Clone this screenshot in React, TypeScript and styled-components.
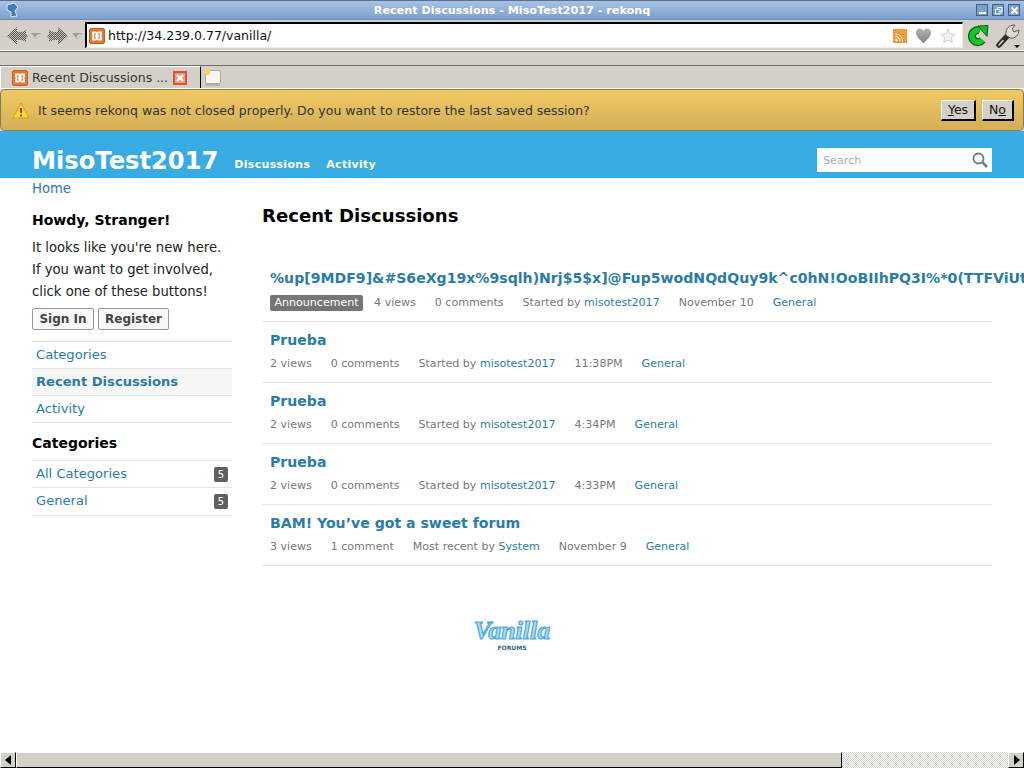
import styled, { createGlobalStyle } from 'styled-components';

const GlobalStyle = createGlobalStyle`
  html, body { margin: 0; padding: 0; height: 100%; overflow: hidden; background: #fff; }
  body { font-family: "DejaVu Sans", sans-serif; }
  * { box-sizing: border-box; }
  a { text-decoration: none; color: #2b7ba8; }
`;

const discussions = [
  { title: 'Prueba', views: '2 views', comments: '0 comments', label: 'Started by', user: 'misotest2017', date: '11:38PM' },
  { title: 'Prueba', views: '2 views', comments: '0 comments', label: 'Started by', user: 'misotest2017', date: '4:34PM' },
  { title: 'Prueba', views: '2 views', comments: '0 comments', label: 'Started by', user: 'misotest2017', date: '4:33PM' },
  { title: 'BAM! You’ve got a sweet forum', views: '3 views', comments: '1 comment', label: 'Most recent by', user: 'System', date: 'November 9' },
];

const Favicon = () => (
  <IconBox width="16" height="16" viewBox="0 0 16 16">
    <rect x="0.5" y="0.5" width="15" height="15" rx="1.5" fill="#e8772e" stroke="#c65f20" />
    <path d="M3 3.500h4l1 1 1-1h4v3.500l-1 1 1 1v3.500H9l-1-1-1 1H3V9l1-1-1-1z" fill="#fff" />
    <path d="M4.500 5.500H7L6 8l1 2.500H4.500L5.500 8zM11.500 5.500H9L10 8l-1 2.500h2.500L10.500 8z" fill="#e8772e" />
  </IconBox>
);

const NavArrow = ({ flip }: { flip?: boolean }) => (
  <IconBox width="21" height="20" viewBox="0 0 21 20" style={{ transform: flip ? 'scaleX(-1)' : undefined }}>
    <defs>
      <pattern id={flip ? 'ditherB' : 'ditherA'} width="2" height="2" patternUnits="userSpaceOnUse">
        <rect width="2" height="2" fill="#c8c6c1" />
        <rect width="1" height="1" fill="#55534f" />
        <rect x="1" y="1" width="1" height="1" fill="#55534f" />
      </pattern>
    </defs>
    <path d="M0 10 L10 1 V6 H15 L19 4 V8 L21 10 L19 12 V16 L15 14 H10 V19 Z" fill={`url(#${flip ? 'ditherB' : 'ditherA'})`} />
  </IconBox>
);

const Caret = () => (
  <IconBox width="10" height="6" viewBox="0 0 10 6">
    <path d="M0 0H10L5 6Z" fill="#a09e98" />
    <path d="M9 1L5 5 4.500 4 7 1.500Z" fill="#f4f3ef" />
  </IconBox>
);

const App = () => (
  <Window>
    <GlobalStyle />
    <TitleBar>
      <AppIcon viewBox="0 0 14 16" width="14" height="16">
        <path d="M2 3 L9 1 L13 5 L10 9 L12 14 L6 15 L6 10 L2 8Z" fill="#3f7cb5" stroke="#e3e9f0" />
      </AppIcon>
      <TitleText>Recent Discussions - MisoTest2017 - rekonq</TitleText>
      <WindowButtons>
        <WindowButton><svg width="9" height="9" viewBox="0 0 9 9"><rect x="1" y="6" width="7" height="2" fill="#fff" /></svg></WindowButton>
        <WindowButton><svg width="9" height="9" viewBox="0 0 9 9"><path d="M1.500 3.500h4.500v4.500h-4.500zM3.500 3V1.500h4.500v4.500H6.500" fill="none" stroke="#fff" /></svg></WindowButton>
        <WindowButton><svg width="9" height="9" viewBox="0 0 9 9"><path d="M1.500 1.500l6 6M7.500 1.500l-6 6" stroke="#fff" strokeWidth="2" /></svg></WindowButton>
      </WindowButtons>
    </TitleBar>

    <Toolbar>
      <NavGroup>
        <NavArrow />
        <Caret />
        <NavArrow flip />
        <Caret />
      </NavGroup>
      <UrlBar>
        <Favicon />
        <UrlText>http://34.239.0.77/vanilla/</UrlText>
        <UrlIcons>
          <svg width="14" height="14" viewBox="0 0 14 14">
            <rect width="14" height="14" fill="#f39a3a" />
            <circle cx="3.500" cy="11" r="1.200" fill="#fff" />
            <path d="M2.500 7.500a4.500 4.500 0 0 1 4.500 4.500M2.500 5a7 7 0 0 1 7 7" fill="none" stroke="#fff" />
          </svg>
          <svg width="17" height="17" viewBox="0 0 17 17">
            <defs>
              <linearGradient id="heartFill" x1="0" y1="0" x2="0" y2="1">
                <stop offset="0" stopColor="#b5b5b5" />
                <stop offset="1" stopColor="#808080" />
              </linearGradient>
            </defs>
            <path d="M8.500 16 C3 11 1 9 1 5.500 C1 3 3 1.500 5 1.500 C6.500 1.500 8 2.500 8.500 4 C9 2.500 10.500 1.500 12 1.500 C14 1.500 16 3 16 5.500 C16 9 14 11 8.500 16Z" fill="url(#heartFill)" />
          </svg>
          <svg width="16" height="16" viewBox="0 0 16 16">
            <path d="M8 1 L10.100 5.600 15 6.200 11.400 9.600 12.400 14.600 8 12.100 3.600 14.600 4.600 9.600 1 6.200 5.900 5.600Z" fill="#f2f2f0" stroke="#cfcfcb" />
          </svg>
        </UrlIcons>
      </UrlBar>
      <ToolIcons>
        <svg width="22" height="24" viewBox="0 0 22 24">
          <path d="M15.500 16 A6 6 0 1 1 13 6.500" fill="none" stroke="#0a5f12" strokeWidth="8" />
          <path d="M15.500 16 A6 6 0 1 1 13 6.500" fill="none" stroke="#17c42a" strokeWidth="5.500" />
          <path d="M11 2 L21 1.500 L20 12.500 Z" fill="#17b528" stroke="#0a5f12" />
        </svg>
        <WrenchWrap>
          <svg width="24" height="24" viewBox="0 0 24 24">
            <path d="M3 21 L14 9" stroke="#2e2c2a" strokeWidth="5.500" strokeLinecap="round" />
            <path d="M3 21 L7 16.500" stroke="#d8d6d1" strokeWidth="1.500" strokeLinecap="round" />
            <path d="M10 11 C9 5 13 1 19 1 L16 5 L18 8 L23 6 C23 11 19 15 14 14Z" fill="#dedcd7" stroke="#5d5b57" />
          </svg>
          <WrenchCaret />
        </WrenchWrap>
      </ToolIcons>
    </Toolbar>

    <SpacerBar />

    <TabBar>
      <Tab>
        <Favicon />
        <TabLabel>Recent Discussions ...</TabLabel>
        <TabClose>
          <svg width="8" height="8" viewBox="0 0 8 8"><path d="M1 1l6 6M7 1L1 7" stroke="#fff" strokeWidth="2.200" /></svg>
        </TabClose>
      </Tab>
      <NewTab>
        <svg width="17" height="17" viewBox="0 0 17 17">
          <rect x="1" y="15" width="15" height="2" fill="#b5b3ac" />
          <rect x="1.500" y="1.500" width="15" height="13" rx="1.500" fill="#f7f6f1" stroke="#aaa89f" />
          <circle cx="3.500" cy="3" r="3" fill="#f3d75c" />
        </svg>
      </NewTab>
    </TabBar>

    <Notice>
      <IconBox width="18" height="17" viewBox="0 0 18 17">
        <path d="M9 1 L17 16 H1 Z" fill="#f8dc36" stroke="#e09a1c" strokeLinejoin="round" />
        <path d="M9 6v5" stroke="#a33" strokeWidth="2" />
        <rect x="8" y="12.500" width="2" height="2" fill="#a33" />
      </IconBox>
      <NoticeText>It seems rekonq was not closed properly. Do you want to restore the last saved session?</NoticeText>
      <NoticeButton $width={35}><u>Y</u>es</NoticeButton>
      <NoticeButton $width={32}>N<u>o</u></NoticeButton>
    </Notice>

    <Page>
      <SiteHeader>
        <SiteTitle>MisoTest2017</SiteTitle>
        <SiteNav>
          <a>Discussions</a>
          <a>Activity</a>
        </SiteNav>
        <SearchBox>
          <SearchText>Search</SearchText>
          <svg width="16" height="16" viewBox="0 0 16 16">
            <circle cx="6.500" cy="6.500" r="5" fill="none" stroke="#777" strokeWidth="1.800" />
            <path d="M10.500 10.500L15 15" stroke="#777" strokeWidth="2.500" />
          </svg>
        </SearchBox>
      </SiteHeader>

      <Breadcrumb><a>Home</a></Breadcrumb>

      <Columns>
        <Sidebar>
          <Howdy>Howdy, Stranger!</Howdy>
          <Intro>It looks like you're new here.<br />If you want to get involved,<br />click one of these buttons!</Intro>
          <AuthRow>
            <AuthButton>Sign In</AuthButton>
            <AuthButton>Register</AuthButton>
          </AuthRow>
          <SideList>
            <SideItem><a>Categories</a></SideItem>
            <SideItem $active><a>Recent Discussions</a></SideItem>
            <SideItem><a>Activity</a></SideItem>
          </SideList>
          <SideHeading>Categories</SideHeading>
          <SideList>
            <SideItem><a>All Categories</a><Count>5</Count></SideItem>
            <SideItem $tall><a>General</a><Count>5</Count></SideItem>
          </SideList>
        </Sidebar>

        <Content>
          <PageTitle>Recent Discussions</PageTitle>
          <Discussion $tagged>
            <DiscussionTitle>%up[9MDF9]&amp;#S6eXg19x%9sqlh)Nrj$5$x]@Fup5wodNQdQuy9k^c0hN!OoBIIhPQ3I%*0(TTFViUtYv</DiscussionTitle>
            <Meta $tagged>
              <Tag>Announcement</Tag>
              <span>4 views</span>
              <span>0 comments</span>
              <span>Started by <a>misotest2017</a></span>
              <span>November 10</span>
              <a>General</a>
            </Meta>
          </Discussion>
          {discussions.map((d, i) => (
            <Discussion key={i}>
              <DiscussionTitle>{d.title}</DiscussionTitle>
              <Meta>
                <span>{d.views}</span>
                <span>{d.comments}</span>
                <span>{d.label} <a>{d.user}</a></span>
                <span>{d.date}</span>
                <a>General</a>
              </Meta>
            </Discussion>
          ))}
          <Footer>
            <Logo>
              <LogoWord>Vanilla</LogoWord>
              <LogoSub>FORUMS</LogoSub>
            </Logo>
          </Footer>
        </Content>
      </Columns>
    </Page>

    <Scrollbar>
      <ScrollButton>
        <svg width="7" height="10" viewBox="0 0 7 10"><path d="M6 0V10L0 5Z" fill="#000" /></svg>
      </ScrollButton>
      <ScrollThumb />
      <ScrollTrough />
      <ScrollButton>
        <svg width="7" height="10" viewBox="0 0 7 10"><path d="M1 0V10L7 5Z" fill="#000" /></svg>
      </ScrollButton>
    </Scrollbar>
  </Window>
);

export default App;

const IconBox = styled.svg`
  flex: none;
  display: block;
`;

const Window = styled.div`
  width: 1024px;
  height: 768px;
  display: flex;
  flex-direction: column;
  overflow: hidden;
  background: #d4d0c8;
`;

const TitleBar = styled.div`
  position: relative;
  height: 20px;
  flex: none;
  display: flex;
  align-items: center;
  justify-content: center;
  background: linear-gradient(#a6c1e4, #7da0d0);
  border-top: 1px solid #5f6f88;
  border-bottom: 1px solid #6c8cb8;
`;

const AppIcon = styled.svg`
  position: absolute;
  left: 5px;
  top: 1px;
`;

const TitleText = styled.div`
  font-size: 11.200px;
  font-weight: bold;
  color: #fff;
`;

const WindowButtons = styled.div`
  position: absolute;
  right: 4px;
  top: 3px;
  display: flex;
  gap: 4px;
`;

const WindowButton = styled.div`
  width: 12px;
  height: 12px;
  display: flex;
  align-items: center;
  justify-content: center;
  background: #7fa0cb;
  border: 1px solid #3f5f8c;
`;

const Toolbar = styled.div`
  height: 32px;
  flex: none;
  display: flex;
  align-items: center;
  padding: 0 3px 0 7px;
  border-bottom: 1px solid #6f6d68;
  box-shadow: inset 0 -1px 0 #fff;
  background: #d4d0c8;
`;

const NavGroup = styled.div`
  width: 78px;
  flex: none;
  display: flex;
  align-items: center;
  svg:nth-child(2) { margin: 0 6px 0 3px; }
  svg:nth-child(4) { margin-left: 4px; }
`;

const UrlBar = styled.div`
  width: 878px;
  height: 26px;
  margin-top: -1px;
  flex: none;
  display: flex;
  align-items: center;
  gap: 3px;
  padding: 0 6px 0 2px;
  background: #fff;
  border-top: 2px solid #000;
  border-left: 2px solid #000;
  border-right: 1px solid #f0eee9;
  border-bottom: 1px solid #f0eee9;
`;

const UrlText = styled.div`
  flex: 1;
  font-size: 12.500px;
  color: #111;
`;

const UrlIcons = styled.div`
  display: flex;
  align-items: center;
  gap: 8px;
`;

const ToolIcons = styled.div`
  flex: none;
  display: flex;
  align-items: center;
  gap: 7px;
  padding-left: 4px;
`;

const WrenchWrap = styled.div`
  position: relative;
  width: 24px;
  height: 24px;
`;

const WrenchCaret = styled.div`
  position: absolute;
  right: 0;
  bottom: 0;
  border-left: 3px solid transparent;
  border-right: 3px solid transparent;
  border-top: 3px solid #000;
`;

const SpacerBar = styled.div`
  height: 14px;
  flex: none;
  background: #d4d0c8;
  border-bottom: 1px solid #6f6d68;
`;

const TabBar = styled.div`
  height: 23px;
  flex: none;
  display: flex;
  align-items: stretch;
  border-bottom: 1px solid #fff;
`;

const Tab = styled.div`
  width: 201px;
  display: flex;
  align-items: center;
  padding: 0 13px 0 11px;
  gap: 4px;
  background: #d4d0c8;
  border-left: 1px solid #fff;
  border-top: 1px solid #fff;
  border-right: 1px solid #000;
`;

const TabLabel = styled.div`
  flex: 1;
  font-size: 12.500px;
  white-space: nowrap;
  color: #333;
`;

const TabClose = styled.div`
  width: 14px;
  height: 14px;
  display: flex;
  align-items: center;
  justify-content: center;
  background: #ec9a80;
  border: 2px solid #d8533a;
`;

const NewTab = styled.div`
  width: 22px;
  padding: 3px 0 0 3px;
`;

const Notice = styled.div`
  height: 42px;
  flex: none;
  display: flex;
  align-items: center;
  gap: 6px;
  padding: 0 9px 0 11px;
  background: linear-gradient(#f1ca64, #d4ae58);
  border: 1px solid #8d7a4b;
  border-radius: 5px;
`;

const NoticeText = styled.div`
  flex: 1;
  padding-left: 2px;
  font-size: 12.500px;
  color: #333;
`;

const NoticeButton = styled.button<{ $width: number }>`
  width: ${(p) => p.$width}px;
  height: 21px;
  padding: 0;
  font-family: inherit;
  font-size: 12.500px;
  color: #111;
  background: #d4d0c8;
  border-top: 1px solid #fff;
  border-left: 1px solid #fff;
  border-right: 2px solid #000;
  border-bottom: 2px solid #000;
`;

const Page = styled.div`
  flex: 1;
  min-height: 0;
  background: #fff;
  overflow: hidden;
`;

const SiteHeader = styled.div`
  height: 47px;
  display: flex;
  align-items: flex-end;
  padding: 0 32px 2px;
  background: #38abe3;
`;

const SiteTitle = styled.div`
  font-size: 24.200px;
  font-weight: bold;
  line-height: 29px;
  color: #fff;
`;

const SiteNav = styled.div`
  display: flex;
  gap: 16px;
  margin-left: 16px;
  padding-bottom: 5px;
  flex: 1;
  font-size: 11px;
  font-weight: bold;
  letter-spacing: 0.3px;
  a { color: #fff; }
`;

const SearchBox = styled.div`
  width: 175px;
  height: 24px;
  margin-bottom: 4px;
  display: flex;
  align-items: center;
  justify-content: space-between;
  padding: 0 4px 0 6px;
  background: #fff;
`;

const SearchText = styled.span`
  font-size: 11.200px;
  color: #aaa;
`;

const Breadcrumb = styled.div`
  padding: 2px 32px 0;
  height: 21px;
  font-size: 13.200px;
  line-height: 17px;
`;

const Columns = styled.div`
  display: flex;
  gap: 30px;
  padding: 0 32px;
`;

const Sidebar = styled.div`
  width: 200px;
  flex: none;
  padding-top: 11px;
`;

const Howdy = styled.div`
  font-size: 14px;
  font-weight: bold;
  line-height: 20px;
  color: #000;
`;

const Intro = styled.div`
  margin-top: 7px;
  font-size: 13.200px;
  line-height: 22px;
  color: #222;
`;

const AuthRow = styled.div`
  display: flex;
  gap: 4px;
  margin-top: 5px;
`;

const AuthButton = styled.button`
  height: 22px;
  min-width: 62px;
  padding: 0 6px;
  font-family: inherit;
  font-size: 12px;
  font-weight: bold;
  color: #444;
  background: #f8f8f8;
  border: 1px solid #999;
  border-radius: 2px;
`;

const SideList = styled.div`
  margin-top: 11px;
  border-top: 1px solid #e4e4e4;
`;

const SideItem = styled.div<{ $active?: boolean; $tall?: boolean }>`
  height: ${(p) => (p.$tall ? 28 : 27)}px;
  display: flex;
  align-items: center;
  justify-content: space-between;
  padding: 0 4px ${(p) => (p.$tall ? 3 : 2)}px;
  font-size: 13.100px;
  border-bottom: 1px solid #e4e4e4;
  background: ${(p) => (p.$active ? '#f6f6f6' : 'transparent')};
  font-weight: ${(p) => (p.$active ? 'bold' : 'normal')};
`;

const SideHeading = styled.div`
  margin-top: 12px;
  margin-bottom: -3px;
  font-size: 14px;
  font-weight: bold;
  line-height: 17px;
  color: #000;
`;

const Count = styled.span`
  width: 14px;
  height: 15px;
  margin-top: 2px;
  line-height: 15px;
  text-align: center;
  font-size: 10px;
  color: #fff;
  background: #5f5f5f;
  border-radius: 2px;
`;

const Content = styled.div`
  flex: 1;
  min-width: 0;
`;

const PageTitle = styled.div`
  height: 61px;
  font-size: 18.100px;
  font-weight: bold;
  line-height: 34px;
  color: #000;
`;

const Discussion = styled.div<{ $tagged?: boolean }>`
  height: ${(p) => (p.$tagged ? 62 : 61)}px;
  padding: 8px 8px 0;
  border-bottom: 1px solid #e4e4e4;
  white-space: nowrap;
`;

const DiscussionTitle = styled.div`
  height: 20px;
  font-size: 14.100px;
  font-weight: bold;
  line-height: 20px;
  color: #2b7ba8;
`;

const Meta = styled.div<{ $tagged?: boolean }>`
  display: flex;
  align-items: center;
  gap: 19px;
  height: 20px;
  margin-top: ${(p) => (p.$tagged ? 4 : 3)}px;
  font-size: 11.050px;
  color: #777;
`;

const Tag = styled.span`
  margin-top: 2px;
  margin-right: -8px;
  padding: 0 4.500px;
  height: 16px;
  line-height: 16px;
  color: #fff;
  background: #757575;
  border-radius: 2px;
`;

const Footer = styled.div`
  display: flex;
  justify-content: center;
  margin-top: 52px;
  margin-left: -230px;
`;

const Logo = styled.div`
  display: flex;
  flex-direction: column;
  align-items: center;
`;

const LogoWord = styled.div`
  font-family: "Liberation Serif", serif;
  font-style: italic;
  font-weight: bold;
  font-size: 26px;
  line-height: 26px;
  color: #a8dcf6;
  -webkit-text-stroke: 1.200px #4ea8e2;
`;

const LogoSub = styled.div`
  font-size: 6px;
  font-weight: bold;
  line-height: 7px;
  color: #2f5f8f;
`;

const Scrollbar = styled.div`
  height: 16px;
  flex: none;
  display: flex;
`;

const ScrollButton = styled.div`
  width: 16px;
  flex: none;
  display: flex;
  align-items: center;
  justify-content: center;
  background: #d4d0c8;
  border-top: 1px solid #fff;
  border-left: 1px solid #fff;
  border-right: 1px solid #000;
  border-bottom: 1px solid #000;
`;

const ScrollThumb = styled.div`
  width: 826px;
  flex: none;
  background: #d4d0c8;
  border-top: 1px solid #fff;
  border-left: 1px solid #fff;
  border-right: 1px solid #000;
  border-bottom: 1px solid #000;
`;

const ScrollTrough = styled.div`
  flex: 1;
  background-color: #d4d0c8;
  background-image: repeating-conic-gradient(#fff 0 25%, #d4d0c8 0 50%);
  background-size: 2px 2px;
`;
